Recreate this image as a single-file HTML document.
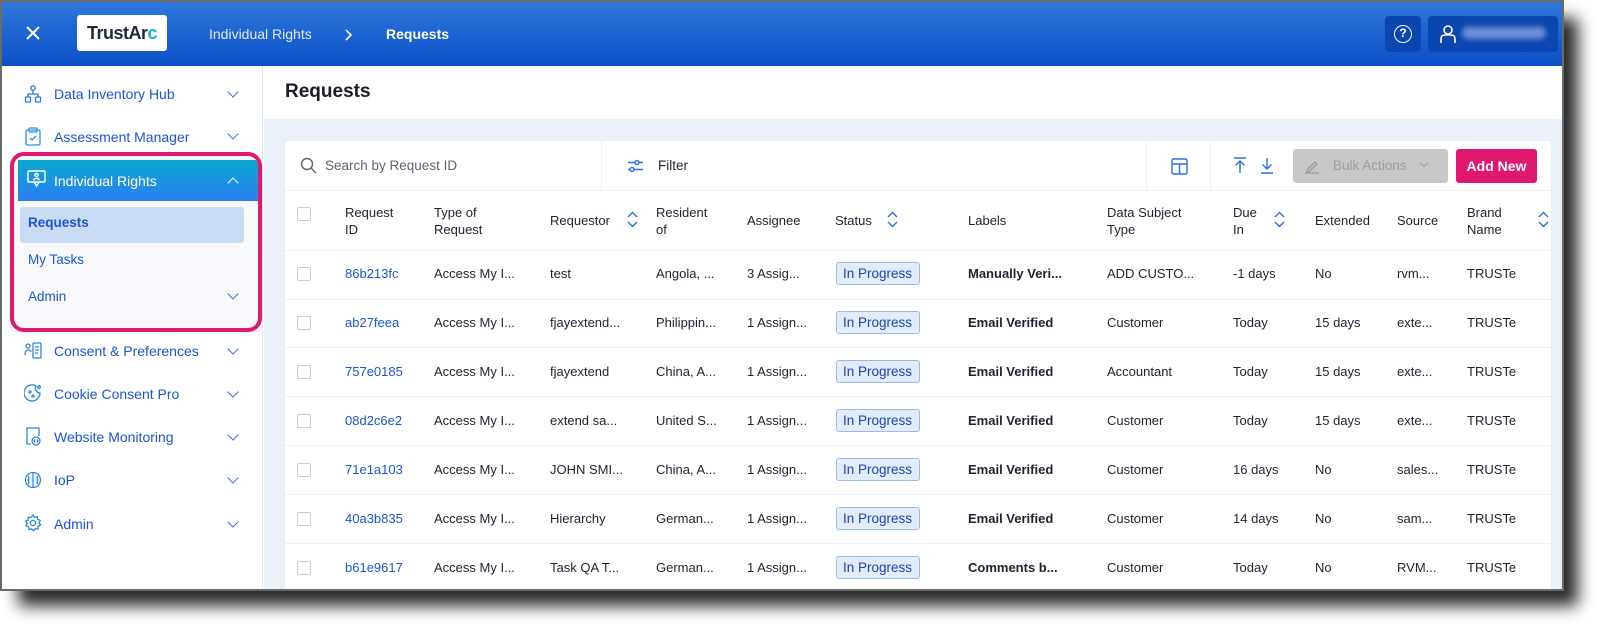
<!DOCTYPE html>
<html><head><meta charset="utf-8"><style>
*{box-sizing:border-box;margin:0;padding:0}
body{width:1600px;height:627px;background:#fff;position:relative;overflow:hidden;font-family:"Liberation Sans",sans-serif;color:#1f2330}
.shadow{position:absolute;left:18px;top:18px;width:1560px;height:588px;background:#2a2a2a;filter:blur(8px);border-radius:4px}
.frame{position:absolute;left:0;top:0;width:1564px;height:591px;background:#fff;border:2px solid #6a6a6a;border-right-width:2px;overflow:hidden}
.a{position:absolute;white-space:nowrap}
.nav{position:absolute;left:0;top:0;width:1564px;height:64px;background:linear-gradient(#3077da,#0b50c8)}
.side{position:absolute;left:0;top:64px;width:261px;height:530px;background:#fff;border-right:1px solid #e3e8ef}
.si{font-size:14px;color:#1b55d6}
.chev{position:absolute;width:8px;height:8px;border-right:1.5px solid #3a6fd8;border-bottom:1.5px solid #3a6fd8;transform:rotate(45deg)}
.main{position:absolute;left:262px;top:64px;width:1302px;height:530px;background:#ebf1f9}
.th{font-size:13px;color:#1f2330;line-height:17px}
.td{font-size:13px;color:#1f2330}
.b{font-weight:bold}
.cb{position:absolute;left:295px;width:14px;height:14px;border:1px solid #c9ced6;border-radius:2px;background:#fff}
.badge{position:absolute;left:834px;width:84px;height:23px;border:1px solid #9dbbe8;background:#e2ecfb;border-radius:3px;font-size:13.5px;color:#1845b8;padding-left:6px;line-height:21px}
.line{position:absolute;left:283px;width:1266px;height:1px;background:#eef0f3}
</style></head><body>
<div class="shadow"></div>
<div class="frame">
<div class="nav">
 <svg class="a" style="left:24px;top:24px" width="14" height="14" viewBox="0 0 14 14"><path d="M1 1L13 13M13 1L1 13" stroke="#fff" stroke-width="2"/></svg>
 <div class="a" style="left:75px;top:13px;width:90px;height:36px;background:#fff;border-radius:3px;font-size:18px;font-weight:bold;color:#1f2a3a;line-height:36px;text-align:center;letter-spacing:-0.5px">TrustAr<span style="color:#19b4c9">c</span></div>
 <div class="a" style="left:207px;top:24px;font-size:14px;color:#e4ecfb">Individual Rights</div>
 <svg class="a" style="left:343px;top:27px" width="8" height="12" viewBox="0 0 8 12"><path d="M1 1L6 6L1 11" stroke="#fff" stroke-width="1.6" fill="none"/></svg>
 <div class="a" style="left:384px;top:24px;font-size:14px;color:#fff;font-weight:bold">Requests</div>
 <div class="a" style="left:1383px;top:14px;width:36px;height:36px;background:#0c46b0;border-radius:4px"></div>
 <div class="a" style="left:1392px;top:23px;width:18px;height:18px;border:1.6px solid #fff;border-radius:50%;color:#fff;font-size:12px;font-weight:bold;text-align:center;line-height:15px">?</div>
 <div class="a" style="left:1426px;top:14px;width:130px;height:36px;background:#0c46b0;border-radius:4px"></div>
 <svg class="a" style="left:1438px;top:22px" width="16" height="20" viewBox="0 0 16 20"><circle cx="8" cy="6" r="4" stroke="#fff" stroke-width="1.6" fill="none"/><path d="M1 19V15Q1 11 5 11H11Q15 11 15 15V19" stroke="#fff" stroke-width="1.6" fill="none"/></svg>
 <div class="a" style="left:1460px;top:25px;width:84px;height:12px;background:#6d92d8;border-radius:6px;filter:blur(3px)"></div>
</div>
<div class="side">
 <svg class="a" style="left:22px;top:19px" width="18" height="18" viewBox="0 0 18 18" fill="none" stroke="#2a78e0" stroke-width="1.3"><circle cx="9" cy="3" r="2.2"/><path d="M9 5.2V9M4 12V9H14V12"/><rect x="1.5" y="12" width="5" height="5" rx="1"/><rect x="11.5" y="12" width="5" height="5" rx="1"/></svg>
 <div class="a si" style="left:52px;top:20px">Data Inventory Hub</div><div class="chev" style="left:227px;top:22px"></div>
 <svg class="a" style="left:23px;top:61px" width="16" height="19" viewBox="0 0 16 19" fill="none" stroke="#2a90e0" stroke-width="1.3"><rect x="1" y="3" width="14" height="15" rx="1.5"/><rect x="4" y="1" width="8" height="4" rx="1"/><path d="M5 11L7 13L11 9"/></svg>
 <div class="a si" style="left:52px;top:63px">Assessment Manager</div><div class="chev" style="left:227px;top:64px"></div>
 <div class="a" style="left:8px;top:86px;width:252px;height:180px;border:4px solid #e0196f;border-radius:14px;background:#f7f9fc;overflow:hidden">
  <div class="a" style="left:4px;top:4px;width:240px;height:41px;background:linear-gradient(#0aa8cf,#2c7ff2)"></div>
  <svg class="a" style="left:13px;top:14px" width="19" height="18" viewBox="0 0 19 18" fill="none" stroke="#fff" stroke-width="1.4"><rect x="1" y="1" width="17" height="11" rx="1"/><circle cx="9.5" cy="5" r="1.6"/><path d="M6.5 10Q9.5 6.5 12.5 10M7 12L9.5 16L12 12"/></svg>
  <div class="a" style="left:40px;top:17px;font-size:14px;color:#fff">Individual Rights</div>
  <div class="chev" style="left:215px;top:23px;transform:rotate(225deg);border-color:#fff"></div>
  <div class="a" style="left:6px;top:51px;width:224px;height:36px;background:#cadcf4;border-radius:3px"></div>
  <div class="a" style="left:14px;top:59px;font-size:13.5px;color:#1b55d6;font-weight:bold">Requests</div>
  <div class="a" style="left:14px;top:96px;font-size:13.5px;color:#1b55d6">My Tasks</div>
  <div class="a" style="left:14px;top:133px;font-size:13.5px;color:#1b55d6">Admin</div>
  <div class="chev" style="left:215px;top:134px"></div>
 </div>
 <svg class="a" style="left:22px;top:276px" width="18" height="17" viewBox="0 0 18 17" fill="none" stroke="#2a88e0" stroke-width="1.3"><circle cx="4" cy="4" r="2"/><path d="M1 13Q1 8 4 8Q7 8 7 10"/><rect x="9" y="1" width="8" height="15" rx="1"/><path d="M11 5H15M11 8H15M11 11H14"/></svg>
 <div class="a si" style="left:52px;top:277px">Consent &amp; Preferences</div><div class="chev" style="left:227px;top:279px"></div>
 <svg class="a" style="left:22px;top:318px" width="18" height="18" viewBox="0 0 18 18" fill="none" stroke="#2a88e0" stroke-width="1.3"><path d="M12 2A8 8 0 1 0 16 9Q13 9 12 6Q10 5 12 2Z"/><circle cx="6" cy="8" r="1"/><circle cx="9" cy="12" r="1"/><circle cx="15" cy="3" r="1.3"/></svg>
 <div class="a si" style="left:52px;top:320px">Cookie Consent Pro</div><div class="chev" style="left:227px;top:322px"></div>
 <svg class="a" style="left:23px;top:361px" width="16" height="19" viewBox="0 0 16 19" fill="none" stroke="#2a88e0" stroke-width="1.3"><path d="M6 17H2V1H14V9"/><circle cx="11" cy="14" r="4"/><path d="M10 12.5L9 14L10 15.5M12 12.5L13 14L12 15.5"/></svg>
 <div class="a si" style="left:52px;top:363px">Website Monitoring</div><div class="chev" style="left:227px;top:365px"></div>
 <svg class="a" style="left:22px;top:405px" width="18" height="18" viewBox="0 0 18 18" fill="none" stroke="#2a88e0" stroke-width="1.3"><circle cx="9" cy="9" r="7.5"/><path d="M9 1.5V16.5M4 5Q6 7 4 9Q6 11 4 13M14 5Q12 7 14 9Q12 11 14 13"/></svg>
 <div class="a si" style="left:52px;top:406px">IoP</div><div class="chev" style="left:227px;top:408px"></div>
 <svg class="a" style="left:22px;top:448px" width="18" height="18" viewBox="0 0 18 18" fill="none" stroke="#2a88e0" stroke-width="1.3"><circle cx="9" cy="9" r="2.6"/><path d="M9 1L10.5 3.3L13.2 2.6L13.6 5.3L16.2 6.3L15 8.8L16.6 11L14.1 12.2L14 15L11.3 14.6L9.6 16.8L7.6 14.9L5 15.6L4.6 12.9L2 11.9L3.2 9.4L1.6 7.2L4.1 6L4.2 3.2L6.9 3.6Z"/></svg>
 <div class="a si" style="left:52px;top:450px">Admin</div><div class="chev" style="left:227px;top:452px"></div>
</div>
<div class="main">
 <div class="a" style="left:0;top:0;width:1302px;height:53px;background:#fff"></div>
 <div class="a" style="left:21px;top:15px;font-size:19px;font-weight:bold;color:#1a1d26">Requests</div>
</div>
<div class="a" style="left:283px;top:139px;width:1266px;height:460px;background:#fff;border-radius:3px"></div>
<svg class="a" style="left:298px;top:155px" width="17" height="17" viewBox="0 0 17 17" fill="none" stroke="#666" stroke-width="1.4"><circle cx="7" cy="7" r="5.5"/><path d="M11 11L16 16"/></svg>
<div class="a" style="left:323px;top:156px;font-size:13.5px;color:#5f6470">Search by Request ID</div>
<div class="a" style="left:599px;top:139px;width:1px;height:49px;background:#eef0f3"></div>
<svg class="a" style="left:625px;top:157px" width="16" height="14" viewBox="0 0 16 14" fill="none" stroke="#2a6fe0" stroke-width="1.4"><path d="M1 3.5H16M1 10.5H16"/><circle cx="10" cy="3.5" r="2" fill="#fff"/><circle cx="5" cy="10.5" r="2" fill="#fff"/></svg>
<div class="a" style="left:656px;top:156px;font-size:13.5px;color:#1f2330">Filter</div>
<div class="a" style="left:1144px;top:139px;width:1px;height:49px;background:#eef0f3"></div>
<div class="a" style="left:1208px;top:139px;width:1px;height:49px;background:#eef0f3"></div>
<svg class="a" style="left:1169px;top:156px" width="17" height="17" viewBox="0 0 17 17" fill="none" stroke="#2a6fe0" stroke-width="1.4"><rect x="1" y="1" width="15" height="15" rx="1.5"/><path d="M1 6H16M8.5 6V16"/></svg>
<svg class="a" style="left:1231px;top:155px" width="14" height="17" viewBox="0 0 14 17" fill="none" stroke="#2a6fe0" stroke-width="1.4"><path d="M1 1H13M7 4V16M2.5 8.5L7 4L11.5 8.5"/></svg>
<svg class="a" style="left:1258px;top:155px" width="14" height="17" viewBox="0 0 14 17" fill="none" stroke="#2a6fe0" stroke-width="1.4"><path d="M1 16H13M7 1V12M2.5 7.5L7 12L11.5 7.5"/></svg>
<div class="a" style="left:1291px;top:147px;width:155px;height:34px;background:#c8c8c8;border-radius:3px"></div>
<svg class="a" style="left:1302px;top:156px" width="16" height="16" viewBox="0 0 16 16" fill="none" stroke="#9a9a9a" stroke-width="1.3"><path d="M1 15H15M3 12L11 4L13 6L5 14H3Z"/></svg>
<div class="a" style="left:1331px;top:156px;font-size:13.5px;color:#9c9c9c">Bulk Actions</div>
<div class="chev" style="left:1419px;top:158px;width:6px;height:6px;border-color:#9c9c9c;border-width:1.2px"></div>
<div class="a" style="left:1454px;top:147px;width:81px;height:34px;background:#e0196f;border-radius:3px;color:#fff;font-size:14px;font-weight:bold;text-align:center;line-height:34px">Add New</div>
<div class="line" style="top:188px"></div>
<div class="cb" style="top:205px"></div>
<div class="a th" style="left:343px;top:202px">Request<br>ID</div>
<div class="a th" style="left:432px;top:202px">Type of<br>Request</div>
<div class="a th" style="left:548px;top:210px">Requestor</div>
<div class="a th" style="left:654px;top:202px">Resident<br>of</div>
<div class="a th" style="left:745px;top:210px">Assignee</div>
<div class="a th" style="left:833px;top:210px">Status</div>
<div class="a th" style="left:966px;top:210px">Labels</div>
<div class="a th" style="left:1105px;top:202px">Data Subject<br>Type</div>
<div class="a th" style="left:1231px;top:202px">Due<br>In</div>
<div class="a th" style="left:1313px;top:210px">Extended</div>
<div class="a th" style="left:1395px;top:210px">Source</div>
<div class="a th" style="left:1465px;top:202px">Brand<br>Name</div>
<svg class="a" style="left:625px;top:209px" width="11" height="17" viewBox="0 0 11 17" fill="none" stroke="#2a6fe0" stroke-width="1.4"><path d="M1 6L5.5 1.5L10 6M1 11L5.5 15.5L10 11"/></svg>
<svg class="a" style="left:885px;top:209px" width="11" height="17" viewBox="0 0 11 17" fill="none" stroke="#2a6fe0" stroke-width="1.4"><path d="M1 6L5.5 1.5L10 6M1 11L5.5 15.5L10 11"/></svg>
<svg class="a" style="left:1272px;top:209px" width="11" height="17" viewBox="0 0 11 17" fill="none" stroke="#2a6fe0" stroke-width="1.4"><path d="M1 6L5.5 1.5L10 6M1 11L5.5 15.5L10 11"/></svg>
<svg class="a" style="left:1536px;top:209px" width="11" height="17" viewBox="0 0 11 17" fill="none" stroke="#2a6fe0" stroke-width="1.4"><path d="M1 6L5.5 1.5L10 6M1 11L5.5 15.5L10 11"/></svg>
<div class="line" style="top:248px"></div>

<div class="cb" style="top:265px"></div><div class="a td" style="left:343px;top:264px;color:#1b55d6">86b213fc</div><div class="a td" style="left:432px;top:264px">Access My I...</div><div class="a td" style="left:548px;top:264px">test</div><div class="a td" style="left:654px;top:264px">Angola, ...</div><div class="a td" style="left:745px;top:264px">3 Assig...</div><div class="badge" style="top:260px">In Progress</div><div class="a td b" style="left:966px;top:264px">Manually Veri...</div><div class="a td" style="left:1105px;top:264px">ADD CUSTO...</div><div class="a td" style="left:1231px;top:264px">-1 days</div><div class="a td" style="left:1313px;top:264px">No</div><div class="a td" style="left:1395px;top:264px">rvm...</div><div class="a td" style="left:1465px;top:264px">TRUSTe</div>
<div class="line" style="top:297px"></div>
<div class="cb" style="top:314px"></div><div class="a td" style="left:343px;top:313px;color:#1b55d6">ab27feea</div><div class="a td" style="left:432px;top:313px">Access My I...</div><div class="a td" style="left:548px;top:313px">fjayextend...</div><div class="a td" style="left:654px;top:313px">Philippin...</div><div class="a td" style="left:745px;top:313px">1 Assign...</div><div class="badge" style="top:309px">In Progress</div><div class="a td b" style="left:966px;top:313px">Email Verified</div><div class="a td" style="left:1105px;top:313px">Customer</div><div class="a td" style="left:1231px;top:313px">Today</div><div class="a td" style="left:1313px;top:313px">15 days</div><div class="a td" style="left:1395px;top:313px">exte...</div><div class="a td" style="left:1465px;top:313px">TRUSTe</div>
<div class="line" style="top:345px"></div>
<div class="cb" style="top:363px"></div><div class="a td" style="left:343px;top:362px;color:#1b55d6">757e0185</div><div class="a td" style="left:432px;top:362px">Access My I...</div><div class="a td" style="left:548px;top:362px">fjayextend</div><div class="a td" style="left:654px;top:362px">China, A...</div><div class="a td" style="left:745px;top:362px">1 Assign...</div><div class="badge" style="top:358px">In Progress</div><div class="a td b" style="left:966px;top:362px">Email Verified</div><div class="a td" style="left:1105px;top:362px">Accountant</div><div class="a td" style="left:1231px;top:362px">Today</div><div class="a td" style="left:1313px;top:362px">15 days</div><div class="a td" style="left:1395px;top:362px">exte...</div><div class="a td" style="left:1465px;top:362px">TRUSTe</div>
<div class="line" style="top:394px"></div>
<div class="cb" style="top:412px"></div><div class="a td" style="left:343px;top:411px;color:#1b55d6">08d2c6e2</div><div class="a td" style="left:432px;top:411px">Access My I...</div><div class="a td" style="left:548px;top:411px">extend sa...</div><div class="a td" style="left:654px;top:411px">United S...</div><div class="a td" style="left:745px;top:411px">1 Assign...</div><div class="badge" style="top:407px">In Progress</div><div class="a td b" style="left:966px;top:411px">Email Verified</div><div class="a td" style="left:1105px;top:411px">Customer</div><div class="a td" style="left:1231px;top:411px">Today</div><div class="a td" style="left:1313px;top:411px">15 days</div><div class="a td" style="left:1395px;top:411px">exte...</div><div class="a td" style="left:1465px;top:411px">TRUSTe</div>
<div class="line" style="top:443px"></div>
<div class="cb" style="top:461px"></div><div class="a td" style="left:343px;top:460px;color:#1b55d6">71e1a103</div><div class="a td" style="left:432px;top:460px">Access My I...</div><div class="a td" style="left:548px;top:460px">JOHN SMI...</div><div class="a td" style="left:654px;top:460px">China, A...</div><div class="a td" style="left:745px;top:460px">1 Assign...</div><div class="badge" style="top:456px">In Progress</div><div class="a td b" style="left:966px;top:460px">Email Verified</div><div class="a td" style="left:1105px;top:460px">Customer</div><div class="a td" style="left:1231px;top:460px">16 days</div><div class="a td" style="left:1313px;top:460px">No</div><div class="a td" style="left:1395px;top:460px">sales...</div><div class="a td" style="left:1465px;top:460px">TRUSTe</div>
<div class="line" style="top:492px"></div>
<div class="cb" style="top:510px"></div><div class="a td" style="left:343px;top:509px;color:#1b55d6">40a3b835</div><div class="a td" style="left:432px;top:509px">Access My I...</div><div class="a td" style="left:548px;top:509px">Hierarchy</div><div class="a td" style="left:654px;top:509px">German...</div><div class="a td" style="left:745px;top:509px">1 Assign...</div><div class="badge" style="top:505px">In Progress</div><div class="a td b" style="left:966px;top:509px">Email Verified</div><div class="a td" style="left:1105px;top:509px">Customer</div><div class="a td" style="left:1231px;top:509px">14 days</div><div class="a td" style="left:1313px;top:509px">No</div><div class="a td" style="left:1395px;top:509px">sam...</div><div class="a td" style="left:1465px;top:509px">TRUSTe</div>
<div class="line" style="top:541px"></div>
<div class="cb" style="top:559px"></div><div class="a td" style="left:343px;top:558px;color:#1b55d6">b61e9617</div><div class="a td" style="left:432px;top:558px">Access My I...</div><div class="a td" style="left:548px;top:558px">Task QA T...</div><div class="a td" style="left:654px;top:558px">German...</div><div class="a td" style="left:745px;top:558px">1 Assign...</div><div class="badge" style="top:554px">In Progress</div><div class="a td b" style="left:966px;top:558px">Comments b...</div><div class="a td" style="left:1105px;top:558px">Customer</div><div class="a td" style="left:1231px;top:558px">Today</div><div class="a td" style="left:1313px;top:558px">No</div><div class="a td" style="left:1395px;top:558px">RVM...</div><div class="a td" style="left:1465px;top:558px">TRUSTe</div>
</div>
</body></html>
